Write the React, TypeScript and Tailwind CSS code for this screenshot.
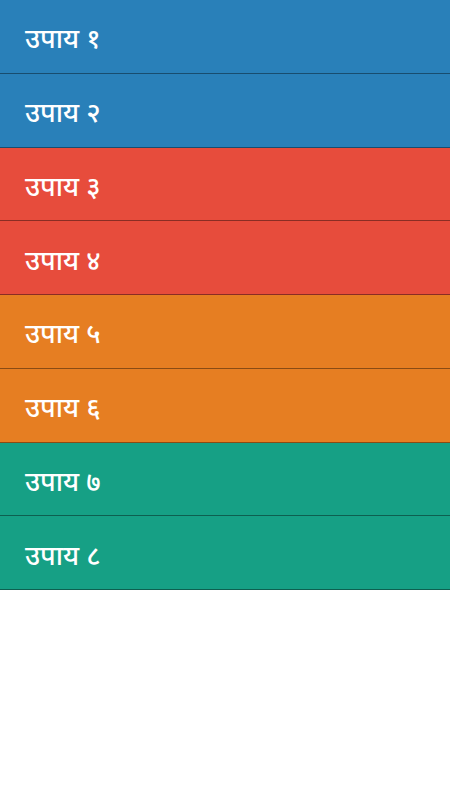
const items = [
  { label: 'उपाय १', bg: 'bg-[#2980b9]' },
  { label: 'उपाय २', bg: 'bg-[#2980b9]' },
  { label: 'उपाय ३', bg: 'bg-[#e74c3c]' },
  { label: 'उपाय ४', bg: 'bg-[#e74c3c]' },
  { label: 'उपाय ५', bg: 'bg-[#e67e22]' },
  { label: 'उपाय ६', bg: 'bg-[#e67e22]' },
  { label: 'उपाय ७', bg: 'bg-[#16a085]' },
  { label: 'उपाय ८', bg: 'bg-[#16a085]' },
]

export default function App() {
  return (
    <div className="w-[450px] h-[800px] bg-white font-['Noto_Sans','Noto_Sans_Devanagari',sans-serif]">
      {items.map((item) => (
        <div
          key={item.label}
          className={`${item.bg} h-[73.75px] border-b border-black/40 flex items-center px-[25px] pt-[3px]`}
        >
          <span className="text-white text-[27px] font-medium leading-none">{item.label}</span>
        </div>
      ))}
    </div>
  )
}
